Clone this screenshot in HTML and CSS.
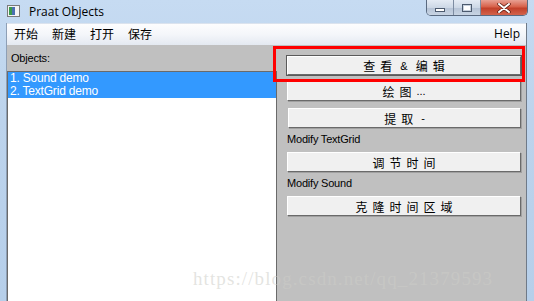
FILE: index.html
```html
<!DOCTYPE html>
<html>
<head>
  <meta charset="UTF-8">
  <link rel="stylesheet" href="styles.css">
</head>
<body>
  <div class="window">
    <div class="titlebar">
      <svg class="app-icon" width="13" height="12" viewBox="0 0 13 12">
        <rect x="0.5" y="0.5" width="12" height="11" fill="#f4f4f4" stroke="#7a7a7a"/>
        <rect x="2" y="2" width="3" height="8" fill="#3a9a4a"/>
        <rect x="5" y="2" width="3" height="8" fill="#4a6fb0"/>
      </svg>
      <span class="title">Praat Objects</span>
      <div class="controls">
        <div class="ctl ctl-min"><span class="glyph-min"></span></div>
        <div class="ctl ctl-max"><span class="glyph-max"></span></div>
        <div class="ctl ctl-close">
          <svg width="14" height="10" viewBox="0 0 14 10">
            <path d="M2 1 L12 9 M12 1 L2 9" stroke="#5a1a10" stroke-width="3.4" stroke-linecap="round"/>
            <path d="M2 1 L12 9 M12 1 L2 9" stroke="#ffffff" stroke-width="2" stroke-linecap="round"/>
          </svg>
        </div>
      </div>
    </div>

    <div class="client">
      <div class="menubar">
        <span class="menu-item">开始</span>
        <span class="menu-item">新建</span>
        <span class="menu-item">打开</span>
        <span class="menu-item">保存</span>
        <span class="menu-item help">Help</span>
      </div>

      <div class="main">
        <div class="objects">
          <div class="label objects-label">Objects:</div>
          <div class="listbox">
            <div class="list-row selected">1. Sound demo</div>
            <div class="list-row selected">2. TextGrid demo</div>
          </div>
        </div>

        <div class="actions">
          <div class="btn btn-default">查看<span class="tight"> &amp; </span>编辑</div>
          <div class="btn gap-6">绘图<span class="tight">...</span></div>
          <div class="btn gap-7">提取<span class="tight"> -</span></div>
          <div class="label group-label">Modify TextGrid</div>
          <div class="btn">调节时间</div>
          <div class="label group-label">Modify Sound</div>
          <div class="btn">克隆时间区域</div>
        </div>
      </div>
    </div>

    <div class="highlight"></div>
    <div class="watermark">https://blog.csdn.net/qq_21379593</div>
  </div>
</body>
</html>
```

FILE: styles.css
```css
* {
  box-sizing: border-box;
  margin: 0;
  padding: 0;
}

body {
  font-family: "Liberation Sans", Arial, sans-serif;
  background: #ffffff;
  overflow: hidden;
}

.window {
  position: relative;
  width: 534px;
  height: 301px;
  display: flex;
  flex-direction: column;
  padding: 0 7px 0 6px;
  background: linear-gradient(180deg, #c6dbf2 0%, #bcd3ec 40%, #b6cfea 100%);
}

/* title bar */
.titlebar {
  height: 23px;
  display: flex;
  align-items: flex-start;
  flex-shrink: 0;
}

.app-icon {
  margin: 5px 0 0 1px;
}

.title {
  margin: 4px 0 0 9px;
  font-family: "Open Sans", "Noto Sans", sans-serif;
  font-size: 12px;
  line-height: 15px;
  color: #000;
}

.controls {
  margin-left: auto;
  margin-right: -1px;
  display: flex;
  height: 16px;
  border: 1px solid #5a6a80;
  border-top: none;
  border-radius: 0 0 5px 5px;
  overflow: hidden;
}

.ctl {
  height: 15px;
  display: flex;
  align-items: center;
  justify-content: center;
}

.ctl-min,
.ctl-max {
  width: 27px;
  background: linear-gradient(180deg, #e4ebf4 0%, #cdd8e6 50%, #b5c3d6 51%, #c8d4e3 100%);
  border-right: 1px solid #7d8ca2;
}

.glyph-min {
  width: 10px;
  height: 4px;
  margin-top: 5px;
  background: #fff;
  border: 1px solid #4c5a6e;
}

.glyph-max {
  width: 10px;
  height: 8px;
  background: #fff;
  border: 1px solid #4c5a6e;
  box-shadow: inset 0 0 0 1px #c6d0dd, inset 0 0 0 2px #fff;
}

.ctl-close {
  width: 46px;
  background: linear-gradient(180deg, #e8a093 0%, #d7614a 45%, #c2402a 55%, #d3634c 100%);
}

/* client area */
.client {
  flex: 1;
  display: flex;
  flex-direction: column;
  border-left: 1px solid #8e9fb5;
  border-right: 1px solid #6f7a88;
  min-height: 0;
}

.menubar {
  height: 22px;
  display: flex;
  align-items: center;
  padding-bottom: 1px;
  border-top: 1px solid #dbe3ee;
  background: linear-gradient(180deg, #fdfdfe 0%, #f4f6fa 50%, #e4e9f1 100%);
  font-family: "Noto Sans CJK SC", sans-serif;
  font-size: 12px;
  color: #000;
}

.menu-item {
  padding: 0 7px;
  line-height: 16px;
}

.menu-item.help {
  margin-left: auto;
  font-family: "Open Sans", "Noto Sans", sans-serif;
  font-size: 12px;
  padding-right: 6px;
}

.main {
  flex: 1;
  display: flex;
  background: #c0c0c0;
  min-height: 0;
}

.label {
  font-size: 11px;
  color: #000;
  letter-spacing: -0.2px;
}

/* objects list */
.objects {
  width: 270px;
  display: flex;
  flex-direction: column;
}

.objects-label {
  height: 26px;
  padding: 7px 0 0 4px;
}

.listbox {
  flex: 1;
  background: #ffffff;
  border-top: 1px solid #6a6a6a;
  border-left: 1px solid #6a6a6a;
  border-right: 1px solid #6a6a6a;
}

.list-row {
  height: 13px;
  line-height: 13px;
  padding-left: 2px;
  font-size: 12px;
  letter-spacing: -0.2px;
}

.list-row.selected {
  background: #3399ff;
  color: #ffffff;
}

/* action buttons */
.actions {
  flex: 1;
  display: flex;
  flex-direction: column;
  padding: 11px 5px 0 10px;
}

.btn {
  height: 20px;
  display: flex;
  align-items: center;
  justify-content: center;
  padding-left: 5px;
  background: #f0f0f0;
  border: 1px solid;
  border-color: #ffffff #6a6a6a #6a6a6a #ffffff;
  box-shadow: 1px 1px 0 #a0a0a0;
  font-family: "Noto Sans CJK SC", sans-serif;
  font-size: 12px;
  letter-spacing: 5px;
  color: #000;
  white-space: pre;
}

.btn .tight {
  letter-spacing: 0;
  margin-right: 5px;
  font-family: "Liberation Sans", sans-serif;
  font-size: 11px;
}

.btn-default {
  outline: 1px solid #5a5a5a;
  height: 19px;
}

.gap-6 {
  margin-top: 6px;
}

.gap-7 {
  margin-top: 7px;
  margin-left: 1px;
}

.group-label {
  height: 24px;
  line-height: 22px;
}

/* overlays */
.highlight {
  position: absolute;
  left: 273px;
  top: 46px;
  width: 252px;
  height: 36px;
  border: 3px solid #ff0000;
}

.watermark {
  position: absolute;
  left: 193px;
  top: 268px;
  font-family: "Liberation Serif", serif;
  font-size: 19px;
  letter-spacing: 1.1px;
  color: rgba(205, 205, 200, 0.55);
  pointer-events: none;
}
```
